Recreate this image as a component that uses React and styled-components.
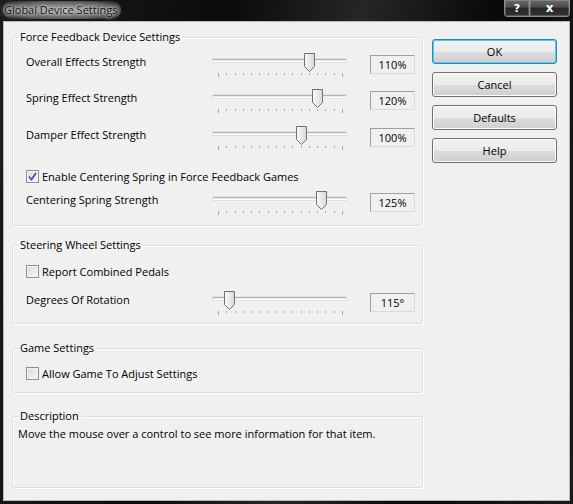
import React from 'react'
import styled, { createGlobalStyle } from 'styled-components'

const Global = createGlobalStyle`
	html, body {
		margin: 0;
		background: #000;
	}
	body {
		font-family: 'Open Sans', 'Noto Sans', sans-serif;
		font-size: 11px;
		color: #000;
	}
`

const Frame = styled.div`
	width: 573px;
	height: 504px;
	box-sizing: border-box;
	display: flex;
	flex-direction: column;
	padding: 0 3px 3px;
	background: linear-gradient(100deg, #1c1c1c 0%, #0b0b0b 35%, #262626 55%, #090909 75%, #1a1a1a 100%);
`

const TitleBar = styled.div`
	height: 21px;
	display: flex;
	justify-content: space-between;
	align-items: flex-start;
`

const Title = styled.span`
	margin-top: 1px;
	padding: 1px 4px 1px 1px;
	font-size: 11px;
	line-height: 16px;
	color: #111;
	border-radius: 9px;
	background: radial-gradient(ellipse at center, rgba(200, 200, 200, 0.8) 0%, rgba(150, 150, 150, 0.55) 65%, rgba(60, 60, 60, 0) 100%);
	text-shadow: 0 0 6px #e0e0e0, 0 0 3px #fff;
`

const CaptionButtons = styled.div`
	display: flex;
	border: 1px solid #8a8a8a;
	border-top: none;
	border-radius: 0 0 4px 4px;
	overflow: hidden;
`

const CaptionButton = styled.div`
	width: ${p => p.$w}px;
	height: 16px;
	display: flex;
	align-items: center;
	justify-content: center;
	color: #fff;
	font-family: 'DejaVu Sans', sans-serif;
	font-weight: bold;
	font-size: ${p => p.$fs}px;
	background: linear-gradient(#6a6a6a 0%, #4a4a4a 45%, #262626 50%, #333 100%);
	box-shadow: inset 0 0 0 1px rgba(255, 255, 255, 0.18);
	& + & {
		border-left: 1px solid #8a8a8a;
	}
`

const Client = styled.div`
	flex: 1;
	display: flex;
	align-items: flex-start;
	padding: 9px 0 0 9px;
	background: #f0f0f0;
	box-shadow: inset 0 0 0 1px #b9b9b9;
`

const Column = styled.div`
	width: 411px;
	display: flex;
	flex-direction: column;
`

const Group = styled.fieldset`
	margin: ${p => p.$mt || 0}px 0 0;
	height: ${p => p.$h}px;
	box-sizing: border-box;
	padding: 0;
	min-width: 0;
	border: 1px solid #d5dfe5;
	border-radius: 3px;
	box-shadow: inset 1px 1px 0 #fff, 1px 1px 0 #fff;
`

const Legend = styled.legend`
	margin-left: 6px;
	padding: 0 2px 0 1px;
	font-size: 11px;
	line-height: 14px;
`

const Body = styled.div`
	padding: ${p => p.$pt || 0}px 0 0 ${p => (p.$pl === undefined ? 13 : p.$pl)}px;
`

const Row = styled.div`
	display: flex;
	align-items: flex-start;
	height: 24px;
	margin-top: ${p => p.$mt || 0}px;
`

const Label = styled.div`
	width: 187px;
	padding-top: 1px;
	line-height: 16px;
	white-space: nowrap;
`

const SliderBox = styled.div`
	position: relative;
	width: 133px;
	height: 24px;
`

const Track = styled.div`
	margin-top: 6px;
	height: 1px;
	background: #e7eaea;
	border-top: 1px solid #b4b4b4;
	border-bottom: 1px solid #fff;
	box-shadow: 0 0 0 1px #e1e1e1;
`

const Thumb = styled.svg`
	position: absolute;
	top: 0;
`

const Ticks = styled.div`
	margin-top: 11px;
	display: flex;
	justify-content: space-between;
	align-items: flex-start;
	padding: 0 3px 0 5px;
`

const Tick = styled.span`
	width: 1px;
	height: ${p => (p.$end ? 4 : 2)}px;
	background: #a8a8a8;
`

const Value = styled.div`
	margin: 2px 0 0 24px;
	width: 45px;
	height: 19px;
	box-sizing: border-box;
	line-height: 17px;
	text-align: center;
	border: 1px solid;
	border-color: #a0a0a0 #dadada #dadada #a0a0a0;
`

const CheckRow = styled.label`
	display: flex;
	align-items: center;
	height: 16px;
	margin-top: ${p => p.$mt || 0}px;
	white-space: nowrap;
`

const Box = styled.span`
	width: 13px;
	height: 13px;
	box-sizing: border-box;
	margin-right: 3px;
	display: flex;
	align-items: center;
	justify-content: center;
	border: 1px solid #8e8f8f;
	background: linear-gradient(135deg, #dcdcdc 0%, #f6f6f6 100%);
	box-shadow: inset 0 0 0 1px #f4f4f4;
`

const Description = styled.div`
	margin-top: 3px;
	line-height: 16px;
`

const Buttons = styled.div`
	margin: 9px 0 0 9px;
	display: flex;
	flex-direction: column;
	gap: 8px;
`

const Button = styled.button`
	width: 125px;
	height: 25px;
	padding: 0;
	font-family: inherit;
	font-size: 11px;
	color: #000;
	border: 1px solid ${p => (p.$default ? '#3c7fb1' : '#707070')};
	border-radius: 3px;
	background: linear-gradient(#f2f2f2 0%, #ebebeb 50%, #dddddd 51%, #cfcfcf 100%);
	box-shadow: inset 0 0 0 1px ${p => (p.$default ? '#48d0f8' : '#fcfcfc')};
`

const Slider = ({ value, min, max }) => {
	const left = Math.round((124 * (value - min)) / (max - min))
	return (
		<SliderBox>
			<Track />
			<Thumb width="11" height="19" viewBox="0 0 11 19" style={{ left }}>
				<defs>
					<linearGradient id="thumbFill" x1="0" y1="0" x2="1" y2="0">
						<stop offset="0" stopColor="#fbfbfb" />
						<stop offset="1" stopColor="#d8d8d8" />
					</linearGradient>
				</defs>
				<path d="M0.5 0.5 H10.5 V13.5 L5.5 18.5 L0.5 13.5 Z" fill="url(#thumbFill)" stroke="#6f6f6f" />
			</Thumb>
			<Ticks>
				{Array.from({ length: 16 }, (_, i) => (
					<Tick key={i} $end={i === 0 || i === 15} />
				))}
			</Ticks>
		</SliderBox>
	)
}

const SliderRow = ({ label, value, min = 0, max = 150, text, mt }) => (
	<Row $mt={mt}>
		<Label>{label}</Label>
		<Slider value={value} min={min} max={max} />
		<Value>{text}</Value>
	</Row>
)

const Check = ({ checked, label, mt }) => (
	<CheckRow $mt={mt}>
		<Box>
			{checked && (
				<svg width="9" height="9" viewBox="0 0 9 9">
					<path d="M1 4.5 L3.5 7.5 L8 1" fill="none" stroke="#3b55a8" strokeWidth="1.8" />
				</svg>
			)}
		</Box>
		{label}
	</CheckRow>
)

const App = () => (
	<>
		<Global />
		<Frame>
			<TitleBar>
				<Title>Global Device Settings</Title>
				<CaptionButtons>
					<CaptionButton $w={24} $fs={11}>?</CaptionButton>
					<CaptionButton $w={39} $fs={12}>x</CaptionButton>
				</CaptionButtons>
			</TitleBar>
			<Client>
				<Column>
					<Group $h={196}>
						<Legend>Force Feedback Device Settings</Legend>
						<Body $pt={9}>
							<SliderRow label="Overall Effects Strength" value={110} text="110%" />
							<SliderRow label="Spring Effect Strength" value={120} text="120%" mt={12} />
							<SliderRow label="Damper Effect Strength" value={100} text="100%" mt={13} />
							<Check checked label="Enable Centering Spring in Force Feedback Games" mt={18} />
							<SliderRow label="Centering Spring Strength" value={125} text="125%" mt={7} />
						</Body>
					</Group>
					<Group $h={86} $mt={12}>
						<Legend>Steering Wheel Settings</Legend>
						<Body>
							<Check label="Report Combined Pedals" mt={11} />
							<SliderRow label="Degrees Of Rotation" value={115} min={40} max={900} text="115°" mt={12} />
						</Body>
					</Group>
					<Group $h={52} $mt={17}>
						<Legend>Game Settings</Legend>
						<Body>
							<Check label="Allow Game To Adjust Settings" mt={10} />
						</Body>
					</Group>
					<Group $h={79} $mt={16}>
						<Legend>Description</Legend>
						<Body $pl={5}>
							<Description>
								Move the mouse over a control to see more information for that item.
							</Description>
						</Body>
					</Group>
				</Column>
				<Buttons>
					<Button $default>OK</Button>
					<Button>Cancel</Button>
					<Button>Defaults</Button>
					<Button>Help</Button>
				</Buttons>
			</Client>
		</Frame>
	</>
)

export default App
